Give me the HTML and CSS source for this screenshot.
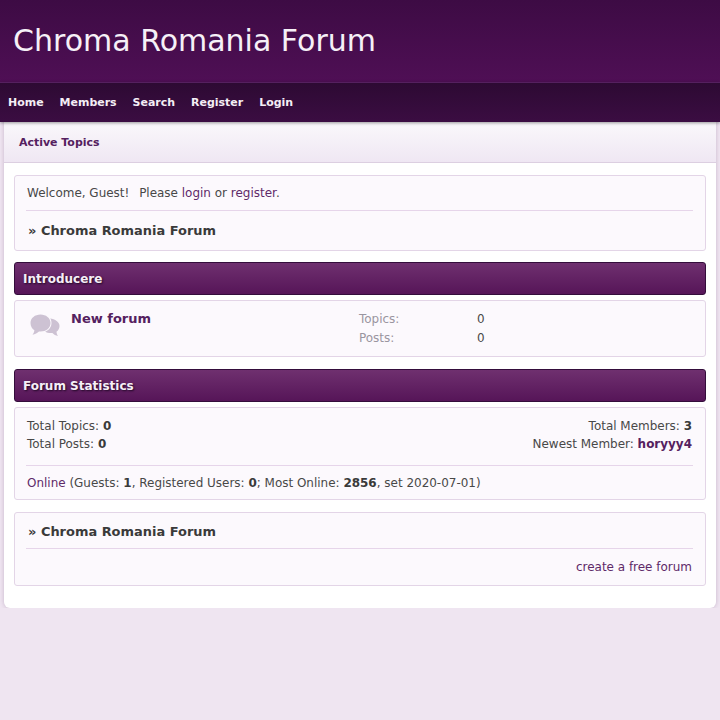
FILE: index.html
```html
<!DOCTYPE html>
<html>
	<head>
		<meta charset="utf-8">
		<title>Chroma Romania Forum</title>
		<link rel="stylesheet" href="styles.css">
	</head>
	<body>
		<div class="header">
			<h1 class="logo">Chroma Romania Forum</h1>
		</div>
		<div class="nav">
			<a href="#">Home</a>
			<a href="#">Members</a>
			<a href="#">Search</a>
			<a href="#">Register</a>
			<a href="#">Login</a>
		</div>

		<div class="wrapper">
			<div class="subnav"><a href="#">Active Topics</a></div>

			<div class="content">
				<div class="box welcome">
					<p class="welcome-text">Welcome, Guest! <span class="please">Please</span> <a href="#">login</a> or <a href="#">register</a>.</p>
					<div class="crumb line">» Chroma Romania Forum</div>
				</div>

				<div class="cat">Introducere</div>
				<div class="box forum">
					<svg class="forum-icon" width="30" height="23" viewBox="0 0 30 23">
						<path class="bubble" d="M20 4.500C25 5 29.500 8 29.500 12c0 2.500-1.200 4.500-3 5.800.1 1.400.6 3 1.500 4.200-2.200-.4-4.200-1.400-5.600-3-3 .3-5.500-.3-7.400-1.500L20 9z"/>
						<path class="bubble bubble-front" d="M10.500.5C16 .5 20.500 4 20.500 9s-4.500 8.500-10 8.500H9c-1.500 1.500-4 3-6.500 3.200 1-1.200 1.700-2.700 1.900-4.500C2 14.800.5 12 .5 9 .5 4 5 .5 10.500.5z"/>
					</svg>
					<div class="forum-title"><a href="#">New forum</a></div>
					<div class="forum-stats">
						<div class="stat"><span class="stat-name">Topics:</span><span>0</span></div>
						<div class="stat"><span class="stat-name">Posts:</span><span>0</span></div>
					</div>
				</div>

				<div class="cat">Forum Statistics</div>
				<div class="box stats">
					<div class="stats-top">
						<div>
							<div>Total Topics: <b>0</b></div>
							<div>Total Posts: <b>0</b></div>
						</div>
						<div class="right">
							<div>Total Members: <b>3</b></div>
							<div>Newest Member: <a href="#"><b>horyyy4</b></a></div>
						</div>
					</div>
					<div class="online line"><a href="#">Online</a> (Guests: <b>1</b>, Registered Users: <b>0</b>; Most Online: <b>2856</b>, set 2020-07-01)</div>
				</div>

				<div class="box foot">
					<div class="crumb">» Chroma Romania Forum</div>
					<div class="credit line"><a href="#">create a free forum</a></div>
				</div>
			</div>
		</div>
	</body>
</html>
```

FILE: styles.css
```css
* {
	margin: 0;
	padding: 0;
	box-sizing: border-box;
}
body {
	background-color: #efe5f1;
	color: #484848;
	font-family: "DejaVu Sans", sans-serif;
	font-size: 11.98px;
	line-height: 18px;
}
b {
	color: #3a3a3a;
}
a {
	color: #5f2a69;
	text-decoration: none;
}
a b {
	color: #55215f;
}
.header {
	height: 82px;
	padding: 0 13px;
	display: flex;
	align-items: center;
	background: linear-gradient(#3d0b44, #4f0f55);
}
.logo {
	color: #f6f0f7;
	font-size: 30px;
	font-weight: normal;
	line-height: 36px;
}
.nav {
	height: 40px;
	padding: 0 8px;
	display: flex;
	align-items: center;
	gap: 16px;
	background: linear-gradient(#2d0a33, #3b0d42);
	border-top: 1px solid #55205f;
	box-shadow: 0 1px 3px rgba(0, 0, 0, .4);
	position: relative;
}
.nav a {
	color: #f4eef5;
	font-size: 10.98px;
	font-weight: bold;
}
.wrapper {
	width: 712px;
	margin: 0 4px;
	padding-bottom: 22px;
	background-color: #fff;
	border-radius: 0 0 6px 6px;
	box-shadow: 0 0 4px rgba(80, 40, 90, .25);
}
.subnav {
	height: 41px;
	padding: 1px 15px 0;
	display: flex;
	align-items: center;
	background: linear-gradient(#faf8fb, #efe7f3);
	border-bottom: 1px solid #dccfe1;
}
.subnav a {
	color: #55215f;
	font-size: 10.96px;
	font-weight: bold;
}
.content {
	padding: 12px 10px 0;
}
.box {
	background-color: #fcf9fd;
	border: 1px solid #e3d5e7;
	border-radius: 3px;
	padding: 0 12px 0 11px;
}
.line {
	border-top: 1px solid #e6d5ea;
}
.welcome {
	height: 76px;
	margin-bottom: 11px;
}
.welcome-text {
	height: 34px;
	padding: 8px 0 0 1px;
}
.please {
	margin-left: 6px;
}
.crumb {
	padding: 10px 2px 0;
	color: #3a3a3a;
	font-size: 12.96px;
	font-weight: bold;
	line-height: 18px;
}
.welcome .crumb {
	padding-top: 11px;
}
.cat {
	height: 33px;
	padding: 0 8px;
	line-height: 32px;
	color: #f6eff7;
	font-size: 12px;
	font-weight: bold;
	text-shadow: 1px 1px 2px #1f0724;
	background: linear-gradient(#6f306f, #561558);
	border: 1px solid #340d3b;
	border-radius: 3px;
	margin-bottom: 5px;
}
.forum {
	height: 57px;
	padding: 0 12px 0 15px;
	margin-bottom: 12px;
	display: flex;
	align-items: flex-start;
}
.forum-icon {
	margin-top: 13px;
	flex-shrink: 0;
}
.bubble {
	fill: #cdc2d3;
}
.bubble-front {
	stroke: #fcf9fd;
	stroke-width: 2;
	paint-order: stroke;
}
.forum-title {
	width: 288px;
	margin-left: 11px;
	padding-top: 9px;
	font-size: 13px;
	font-weight: bold;
}
.forum-title a {
	color: #55215f;
}
.forum-stats {
	padding-top: 9px;
	line-height: 19px;
}
.stat {
	display: flex;
}
.stat-name {
	width: 118px;
	color: #9a95a0;
}
.stats {
	height: 93px;
	margin-bottom: 12px;
}
.stats-top {
	height: 57px;
	padding: 9px 0 0 1px;
	display: flex;
	justify-content: space-between;
}
.right {
	text-align: right;
	margin-right: 1px;
}
.online {
	padding: 8px 0 0 1px;
}
.foot {
	height: 74px;
}
.foot .crumb {
	height: 35px;
}
.credit {
	padding: 9px 1px 0 0;
	text-align: right;
}
```
